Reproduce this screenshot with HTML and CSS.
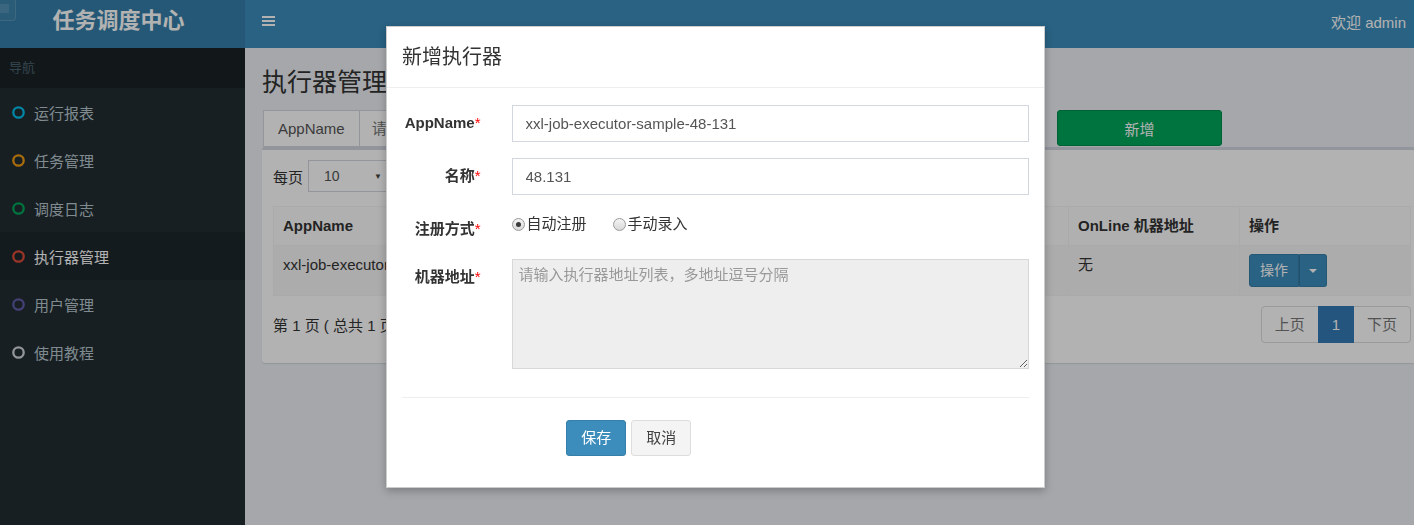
FILE: index.html
```html
<!DOCTYPE html>
<html lang="zh-CN">
<head>
<meta charset="utf-8">
<title>执行器管理</title>
<link rel="stylesheet" href="styles.css">
</head>
<body>
<header class="main-header">
  <div class="corner-tab"><span class="corner-inner"></span></div>
  <div class="logo">任务调度中心</div>
  <nav class="navbar">
    <span class="toggle">
      <svg width="13" height="10" viewBox="0 0 13 10"><rect x="0" y="0" width="13" height="2"/><rect x="0" y="4" width="13" height="2"/><rect x="0" y="8" width="13" height="2"/></svg>
    </span>
    <span class="user">欢迎 admin</span>
  </nav>
</header>
<div class="main">
  <aside class="sidebar">
    <div class="nav-header">导航</div>
    <ul class="menu">
      <li><svg class="dot aqua" viewBox="0 0 13 13"><circle cx="6.5" cy="6.5" r="5.2"/></svg><span>运行报表</span></li>
      <li><svg class="dot yellow" viewBox="0 0 13 13"><circle cx="6.5" cy="6.5" r="5.2"/></svg><span>任务管理</span></li>
      <li><svg class="dot green" viewBox="0 0 13 13"><circle cx="6.5" cy="6.5" r="5.2"/></svg><span>调度日志</span></li>
      <li class="active"><svg class="dot red" viewBox="0 0 13 13"><circle cx="6.5" cy="6.5" r="5.2"/></svg><span>执行器管理</span></li>
      <li><svg class="dot purple" viewBox="0 0 13 13"><circle cx="6.5" cy="6.5" r="5.2"/></svg><span>用户管理</span></li>
      <li><svg class="dot gray" viewBox="0 0 13 13"><circle cx="6.5" cy="6.5" r="5.2"/></svg><span>使用教程</span></li>
    </ul>
  </aside>
  <section class="content-wrap">
    <div class="content-header"><h1>执行器管理</h1></div>
    <div class="content">
      <div class="search-row">
        <div class="input-group"><span class="addon">AppName</span><input type="text" placeholder="请输入AppName"></div>
        <div class="input-group"><span class="addon">名称</span><input type="text" placeholder="请输入名称"></div>
        <button class="btn btn-search">搜索</button>
        <button class="btn btn-add">新增</button>
      </div>
      <div class="box">
        <div class="length-row">
          <span>每页</span>
          <div class="select"><span>10</span><span class="arrow">▼</span></div>
          <span>条记录</span>
        </div>
        <table class="grid">
          <colgroup>
            <col class="c-app"><col><col class="c-sort"><col class="c-type"><col class="c-online"><col class="c-op">
          </colgroup>
          <thead>
            <tr><th>AppName</th><th>名称</th><th>排序</th><th>注册方式</th><th>OnLine 机器地址</th><th>操作</th></tr>
          </thead>
          <tbody>
            <tr>
              <td>xxl-job-executor-sample-48-131</td><td>48.131</td><td>1</td><td>自动注册</td><td>无</td>
              <td><span class="btn-group"><span class="btn-op">操作</span><span class="btn-caret"><i class="caret"></i></span></span></td>
            </tr>
          </tbody>
        </table>
        <div class="pager-row">
          <span class="info">第 1 页 ( 总共 1 页，1 条记录 )</span>
          <div class="pager"><span class="pg first">上页</span><span class="pg active">1</span><span class="pg last">下页</span></div>
        </div>
      </div>
    </div>
  </section>
</div>

<div class="backdrop"></div>

<div class="modal-dialog">
  <div class="modal-header"><h4>新增执行器</h4></div>
  <div class="modal-body">
    <div class="form-group">
      <label class="ctrl-label"><span>AppName</span><span class="req">*</span></label>
      <div class="ctrl"><input class="form-control" type="text" value="xxl-job-executor-sample-48-131"></div>
    </div>
    <div class="form-group">
      <label class="ctrl-label"><span>名称</span><span class="req">*</span></label>
      <div class="ctrl"><input class="form-control" type="text" value="48.131"></div>
    </div>
    <div class="form-group">
      <label class="ctrl-label"><span>注册方式</span><span class="req">*</span></label>
      <div class="ctrl radios">
        <span class="radio-inline"><span class="radio checked"></span><span>自动注册</span></span>
        <span class="radio-inline"><span class="radio"></span><span>手动录入</span></span>
      </div>
    </div>
    <div class="form-group">
      <label class="ctrl-label"><span>机器地址</span><span class="req">*</span></label>
      <div class="ctrl"><textarea class="addr" readonly placeholder="请输入执行器地址列表，多地址逗号分隔"></textarea></div>
    </div>
    <hr class="divider">
    <div class="form-group btn-row">
      <div class="ctrl">
        <button class="mbtn save">保存</button><button class="mbtn cancel">取消</button>
      </div>
    </div>
  </div>
</div>
</body>
</html>
```
FILE: styles.css
```css
* { box-sizing: border-box; }
html, body { margin: 0; height: 100%; }
body {
  font-family: "Liberation Sans", "Noto Sans CJK SC", sans-serif;
  font-size: 15px;
  color: #333;
  background: #ecf0f5;
  overflow: hidden;
}

/* header */
.main-header { display: flex; height: 48px; position: relative; }
.corner-tab {
  position: absolute; left: -5px; top: -5px; width: 21px; height: 26px;
  border: 1px solid rgba(255,255,255,.14); border-radius: 4px;
  background: rgba(255,255,255,.04);
}
.corner-inner {
  position: absolute; left: 4px; top: 8px; width: 9px; height: 9px;
  background: rgba(255,255,255,.12); border-radius: 1px;
}
.logo {
  width: 245px; background: #367fa9; color: #fff;
  font-weight: bold; font-size: 22px; line-height: 42px;
  text-align: center; padding-right: 8px;
}
.navbar {
  flex: 1; background: #3c8dbc; color: #fff;
  display: flex; align-items: center; justify-content: space-between;
  padding: 0 8px 6px 17px;
}
.toggle svg { display: block; fill: #fff; }
.user { font-size: 15px; }

/* layout */
.main { display: flex; height: calc(100% - 48px); }
.sidebar { width: 245px; background: #222d32; flex: none; }
.nav-header {
  background: #1a2226; color: #4b646f; font-size: 13px;
  height: 40px; line-height: 40px; padding-left: 9px;
}
.menu { list-style: none; margin: 0; padding: 0; }
.menu li {
  height: 48px; display: flex; align-items: center;
  padding-left: 12px; color: #b8c7ce; font-size: 15px;
}
.menu li.active { background: #1e282c; color: #fff; }
.dot { width: 13px; height: 13px; margin-right: 9px; fill: none; stroke-width: 2.3; }
.aqua { stroke: #00c0ef; }
.yellow { stroke: #f39c12; }
.green { stroke: #00a65a; }
.red { stroke: #dd4b39; }
.purple { stroke: #605ca8; }
.gray { stroke: #d2d6de; }

.content-wrap { flex: 1; min-width: 0; }
.content-header { padding: 20px 17px 0; }
.content-header h1 { margin: 0; font-size: 25px; font-weight: normal; line-height: 28px; color: #333; }
.content { padding: 14px 0 0 17px; }

.search-row {
  display: grid;
  grid-template-columns: 280px 280px 165px 165px;
  column-gap: 23px;
  padding-left: 1px;
}
.input-group { display: flex; height: 37px; }
.addon {
  border: 1px solid #d2d6de; background: #fff; padding: 0 14px;
  line-height: 35px; color: #555;
}
.input-group input {
  flex: 1; min-width: 0; border: 1px solid #d2d6de; border-left: 0;
  padding: 0 12px; font: inherit; color: #555; background: #fff;
}
.btn { height: 36px; border-radius: 3px; font: inherit; color: #fff; }
.btn-search { background: #3c8dbc; border: 1px solid #367fa9; }
.btn-add { background: #00a65a; border: 1px solid #008d4c; }

.box {
  background: #fff; border-top: 3px solid #d2d6de;
  border-radius: 3px 0 0 3px; box-shadow: 0 1px 1px rgba(0,0,0,.1);
  padding: 10px 3px 10px 10px;
}
.length-row { display: flex; align-items: center; gap: 5px; height: 32px; padding-left: 1px; }
.select {
  width: 90px; height: 32px; border: 1px solid #d2d6de;
  display: flex; align-items: center; justify-content: space-between;
  padding: 0 15px 0 15px; font-size: 14px; color: #555;
}
.arrow { font-size: 8px; color: #444; }

.grid {
  width: calc(100% - 1px); margin: 14px 0 0 1px;
  border-collapse: collapse; table-layout: fixed;
  border: 1px solid #f4f4f4;
}
.c-app { width: 240px; }
.c-sort { width: 120px; }
.c-type { width: 160px; }
.c-online { width: 171px; }
.c-op { width: 171px; }
.grid th {
  text-align: left; padding: 8px 10px 8px 9px; line-height: 22px; font-weight: bold;
  border: 1px solid #f4f4f4; background: #fdfdfd; white-space: nowrap; overflow: hidden;
}
.grid td {
  padding: 8px 10px 8px 9px; vertical-align: top; line-height: 22px;
  border: 1px solid #f4f4f4; background: #f6f6f6; white-space: nowrap; overflow: hidden;
}
.btn-group { display: inline-flex; height: 33px; }
.btn-op {
  background: #3c8dbc; border: 1px solid #367fa9; color: #fff; font-size: 14px;
  padding: 0 10px; line-height: 31px; border-radius: 3px 0 0 3px;
}
.btn-caret {
  width: 28px; background: #3c8dbc; border: 1px solid #367fa9; border-left: 1px solid #31789f;
  border-radius: 0 3px 3px 0; display: flex; align-items: center; justify-content: center;
}
.caret { width: 0; height: 0; border-left: 4px solid transparent; border-right: 4px solid transparent; border-top: 4px solid #fff; }

.pager-row {
  display: flex; align-items: center; justify-content: space-between;
  margin: 10px 0 10px 1px;
}
.pager { display: flex; }
.pg {
  height: 37px; line-height: 35px; padding: 0 13px;
  border: 1px solid #ddd; margin-left: -1px; background: #fff; color: #777;
}
.pg.first { border-radius: 4px 0 0 4px; }
.pg.last { border-radius: 0 4px 4px 0; }
.pg.active { background: #337ab7; border-color: #337ab7; color: #fff; position: relative; }

/* modal */
.backdrop { position: fixed; inset: 0; background: rgba(0,0,0,.3); }
.modal-dialog {
  position: absolute; left: 386px; top: 26px; width: 659px;
  background: #fff; border: 1px solid rgba(0,0,0,.2);
  box-shadow: 0 3px 8px rgba(0,0,0,.25);
}
.modal-header { padding: 15px; border-bottom: 1px solid #eee; }
.modal-header h4 { margin: 0; font-size: 20px; line-height: 30px; font-weight: normal; color: #333; }
.modal-body { padding: 17px 15px 15px; }
.form-group {
  display: grid; grid-template-columns: 2fr 10fr;
  margin: 0 -15px 16px;
}
.ctrl-label {
  padding: 7px 16px 0 15px; text-align: right; font-weight: bold;
  line-height: 22px; color: #333; white-space: nowrap;
}
.req { color: #f00; font-weight: normal; }
.ctrl { padding: 0 15px; }
.form-control {
  width: 100%; height: 37px; border: 1px solid #d2d6de; border-radius: 0;
  padding: 0 13px; font: inherit; color: #555; background: #fff;
}
.radios { min-height: 32px; padding-top: 2px; line-height: 22px; display: flex; align-items: flex-start; }
.radio-inline { display: inline-flex; align-items: center; gap: 2px; margin-right: 26px; height: 22px; }
.radio {
  width: 13px; height: 13px; border-radius: 50%;
  border: 1px solid #9a9a9a;
  background: linear-gradient(#f4f4f4, #d8d8d8);
  display: inline-flex; align-items: center; justify-content: center;
}
.radio.checked::after {
  content: ""; width: 5px; height: 5px; border-radius: 50%; background: #3a3a3a;
}
.addr {
  display: block; width: 100%; height: 110px; background: #eee;
  border: 1px solid #d8d8d8; border-radius: 0; padding: 4px 6px;
  font: inherit; line-height: 22px; color: #555; resize: vertical;
}
.addr::placeholder { color: #999; }
.divider { border: 0; border-top: 1px solid #eee; margin: 28px 0 22px; }
.btn-row { grid-template-columns: 3fr 6fr 3fr; }
.btn-row .ctrl { grid-column: 2; display: flex; gap: 5px; }
.btn-row.form-group { margin-bottom: 16px; }
.mbtn {
  height: 36px; padding: 0 14px; font: inherit; line-height: 34px; border-radius: 3px;
}
.save { background: #3c8dbc; border: 1px solid #367fa9; color: #fff; }
.cancel { background: #f4f4f4; border: 1px solid #ddd; color: #444; }
```
